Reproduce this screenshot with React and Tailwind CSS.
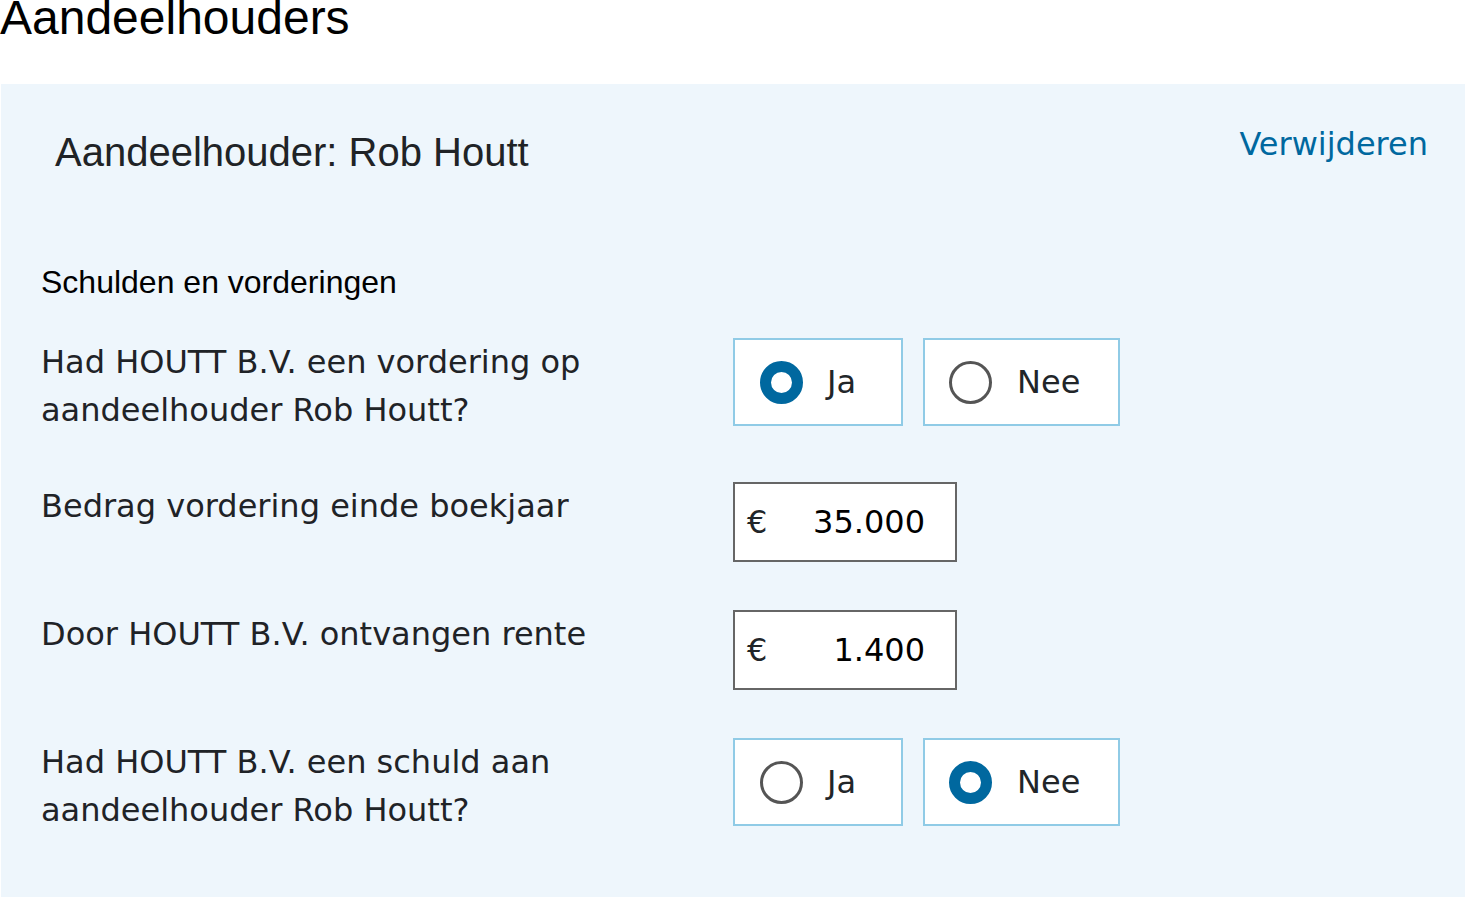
import React, { useState } from "react";

const verdana = { fontFamily: '"DejaVu Sans", Verdana, sans-serif' };
const arial = { fontFamily: '"Liberation Sans", Arial, sans-serif' };

function RadioCircle({ checked }) {
  return checked ? (
    <span className="box-border block h-[43px] w-[43px] shrink-0 rounded-full border-[11px] border-[#00689f] bg-white" />
  ) : (
    <span className="box-border block h-[43px] w-[43px] shrink-0 rounded-full border-[3px] border-[#555555] bg-white" />
  );
}

function YesNo({ value, onChange }) {
  return (
    <div className="flex gap-[20px]">
      <button
        type="button"
        onClick={() => onChange(true)}
        className="flex h-[88px] w-[170px] items-center gap-[24px] border-2 border-[#90cbe6] bg-white pl-[25px] text-[32px] text-[#212529]"
        style={verdana}
      >
        <RadioCircle checked={value === true} />
        <span>Ja</span>
      </button>
      <button
        type="button"
        onClick={() => onChange(false)}
        className="flex h-[88px] w-[197px] items-center gap-[25px] border-2 border-[#90cbe6] bg-white pl-[24px] text-[32px] text-[#212529]"
        style={verdana}
      >
        <RadioCircle checked={value === false} />
        <span>Nee</span>
      </button>
    </div>
  );
}

function MoneyInput({ value }) {
  return (
    <div
      className="flex h-[80px] w-[224px] items-center border-2 border-[#666666] bg-white pl-[12px] pr-[30px] text-[32px]"
      style={verdana}
    >
      <span className="text-[#212529]">€</span>
      <span className="flex-1 text-right text-black">{value}</span>
    </div>
  );
}

function Row({ label, children }) {
  return (
    <div className="flex items-start">
      <div className="w-[692px] shrink-0 pr-[40px] text-[32px] leading-[48px] text-[#1f2327]" style={verdana}>
        {label}
      </div>
      <div>{children}</div>
    </div>
  );
}

export default function App() {
  const [vordering, setVordering] = useState(true);
  const [schuld, setSchuld] = useState(false);

  return (
    <div className="min-h-screen bg-white">
      <h1 className="-mt-[6px] text-[48px] leading-[48px] text-black" style={arial}>
        Aandeelhouders
      </h1>

      <div className="ml-px mt-[42px] bg-[#eef6fc] pb-[63px] pl-[40px] pr-[37px] pt-[36px]">
        <div className="flex items-start justify-between">
          <h2 className="ml-[14px] mt-[9px] text-[40px] leading-[46px] text-[#202326]" style={arial}>
            Aandeelhouder: Rob Houtt
          </h2>
          <button type="button" className="text-[32px] leading-[48px] text-[#00689f]" style={verdana}>
            Verwijderen
          </button>
        </div>

        <h3 className="mt-[89px] text-[32px] leading-[36px] text-black" style={arial}>
          Schulden en vorderingen
        </h3>

        <div className="mt-[38px] flex flex-col gap-[48px]">
          <Row label="Had HOUTT B.V. een vordering op aandeelhouder Rob Houtt?">
            <YesNo value={vordering} onChange={setVordering} />
          </Row>
          <Row label="Bedrag vordering einde boekjaar">
            <MoneyInput value="35.000" />
          </Row>
          <Row label="Door HOUTT B.V. ontvangen rente">
            <MoneyInput value="1.400" />
          </Row>
          <Row label="Had HOUTT B.V. een schuld aan aandeelhouder Rob Houtt?">
            <YesNo value={schuld} onChange={setSchuld} />
          </Row>
        </div>
      </div>
    </div>
  );
}
